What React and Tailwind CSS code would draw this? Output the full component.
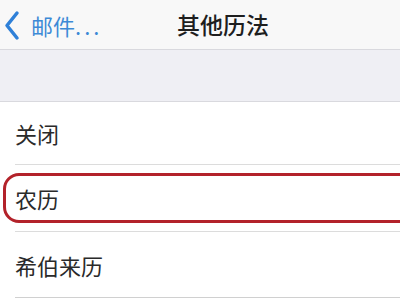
export default function App() {
  const font = { fontFamily: '"Noto Sans CJK SC", "Noto Sans", sans-serif' };
  return (
    <div className="w-[400px] h-[300px] overflow-hidden bg-white" style={font}>
      <div className="h-[49px] bg-[#f8f8f8] flex items-center">
        <div className="flex items-center pl-[3px] w-[177px]">
          <svg width="20" height="32" viewBox="0 0 20 32" className="mr-[8px]">
            <path d="M14 4 L4 16.5 L14 29" fill="none" stroke="#2f80d8" strokeWidth="3.5" strokeLinecap="round" strokeLinejoin="round" />
          </svg>
          <span className="text-[22px] leading-none text-[#3d8ad6]">邮件<span className="tracking-[3px]">...</span></span>
        </div>
        <span className="text-[23px] leading-none text-[#1e1e1e] font-medium">其他历法</span>
      </div>
      <div className="h-[53px] bg-[#efeff4] border-t border-b border-[#d9d9de]"></div>
      <div className="h-[62px] flex items-center pl-[15px]">
        <span className="text-[22px] leading-none text-[#2a2a2a]">关闭</span>
      </div>
      <div className="ml-[15px] h-px bg-[#dcdcdc]"></div>
      <div className="h-[66px] flex items-center pl-[3px]">
        <div className="shrink-0 w-[430px] h-[50px] border-[3px] border-[#b3222a] rounded-[16px] flex items-center pl-[9px]">
          <span className="text-[22px] leading-none text-[#2a2a2a]">农历</span>
        </div>
      </div>
      <div className="ml-[15px] h-px bg-[#dcdcdc]"></div>
      <div className="h-[65px] flex items-center pl-[15px]">
        <span className="text-[22px] leading-none text-[#2a2a2a]">希伯来历</span>
      </div>
      <div className="ml-[15px] h-px bg-[#d0d0d0]"></div>
    </div>
  );
}
